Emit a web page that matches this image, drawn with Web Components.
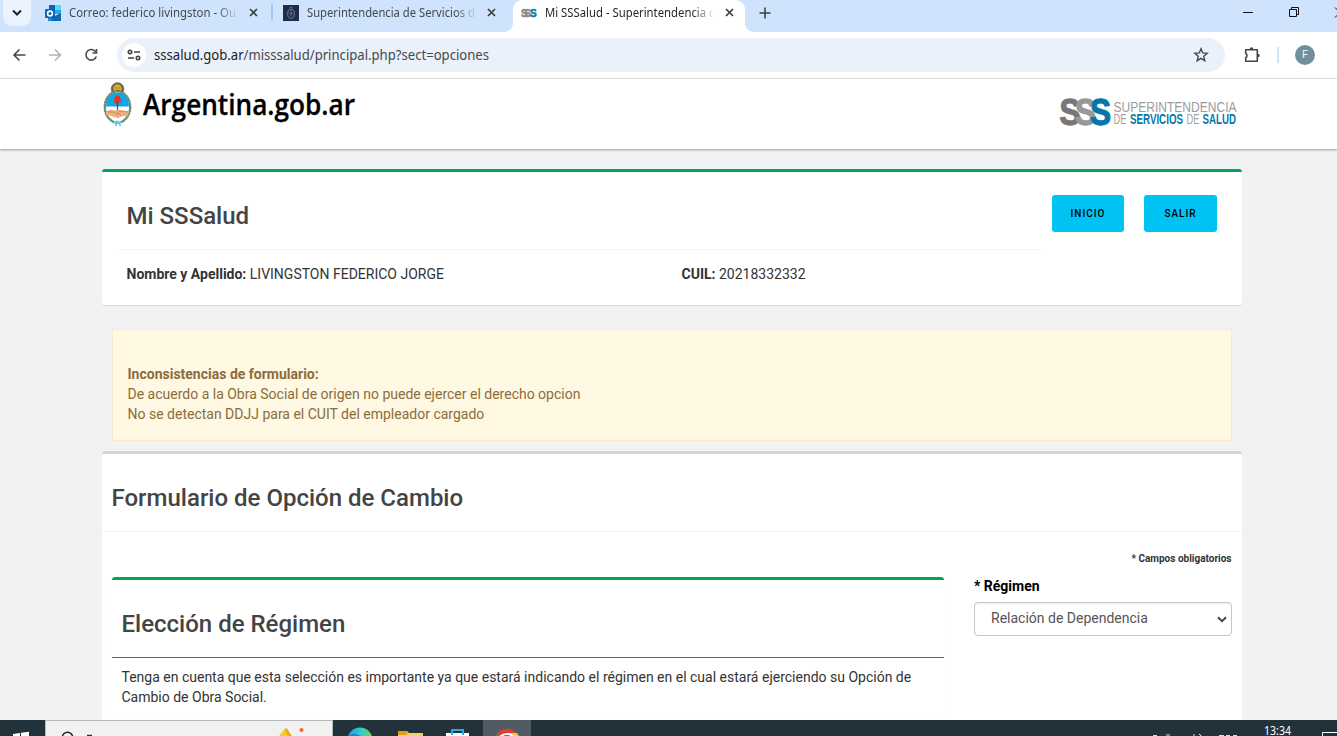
<!DOCTYPE html>
<html lang="es"><head><meta charset="utf-8"><title>Mi SSSalud</title>
<style>
html,body{margin:0;height:736px;overflow:hidden}
body{display:flex;flex-direction:column;background:#f1f2f4;font-family:Roboto,"Liberation Sans",sans-serif;font-size:14px;line-height:20px;color:#333}
</style></head><body>
<browser-tabs></browser-tabs>
<browser-toolbar></browser-toolbar>
<site-header></site-header>
<main-view></main-view>
<task-bar></task-bar>
<script>
const define=(name,html)=>customElements.define(name,class extends HTMLElement{
  constructor(){super();this.attachShadow({mode:'open'}).innerHTML=typeof html==='function'?html(this):html}
});

define('browser-tab',el=>`<style>
:host{display:flex;align-items:center;height:32px;width:238px;box-sizing:border-box;padding:0 12px 7px 11px;font:12px/18px "Noto Sans","Open Sans",sans-serif;color:#444a50;position:relative}
:host([active]){background:#fff;border-radius:9px 9px 0 0;width:232px;padding-left:8px;color:#25282b}
:host([active])::before,:host([active])::after{content:"";position:absolute;bottom:0;width:9px;height:9px}
:host([active])::before{left:-9px;background:radial-gradient(circle at 0 0,transparent 8.6px,#fff 9.2px)}
:host([active])::after{right:-9px;background:radial-gradient(circle at 100% 0,transparent 8.6px,#fff 9.2px)}
::slotted(svg){flex:none;width:16px;height:16px}
.t{width:168px;margin-left:8px;flex:none;height:18px;-webkit-mask:linear-gradient(90deg,#000 148px,transparent 170px)}
.t svg{display:block;overflow:visible}
.x{width:9px;height:9px;margin-left:11.5px;flex:none}
</style><slot></slot><div class="t"><svg width="168" height="18"><text x="0" y="13" fill="currentColor" textLength="${el.getAttribute('len')}" lengthAdjust="spacingAndGlyphs">${el.getAttribute('label')}</text></svg></div>
<svg class="x" viewBox="0 0 9 9"><path d="M1 1l7 7M8 1l-7 7" stroke="#3c4043" stroke-width="1.7"/></svg>`);

define('browser-tabs',`<style>
:host{display:flex;height:32px;flex:none;background:#cfe3fc;overflow:hidden}
.menu{width:28px;height:26px;margin-left:3px;background:#ecf3fe;border-radius:0 0 9px 9px;display:flex;align-items:center;justify-content:center}
.first{margin-left:3px}.sep{width:2px;height:16px;margin:4px 0 0 -1px;background:#a4c9fa}
.sep+browser-tab{margin-left:-1px;width:241px}
.plus{margin:7px 0 0 14px}.win{margin-left:auto}
</style><div class="menu"><svg width="10" height="8" viewBox="0 0 10 8"><path d="M1 1.5l4 4 4-4" fill="none" stroke="#202124" stroke-width="2"/></svg></div>
<browser-tab class="first" label="Correo: federico livingston - Ou" len="167"><svg viewBox="0 0 16 16"><path d="M4 0h12v9H4z" fill="#28a8ea"/><path d="M4 0h6v5H4z" fill="#0364b8"/><path d="M10 0h6v5h-6z" fill="#50d9ff"/><path d="M3 8l7 3 6-3v8H3z" fill="#1490df"/><path d="M8 12l8-4v8H6z" fill="#1066b5"/><rect y="4" width="10" height="9" rx="1" fill="#0a64b7"/><circle cx="5" cy="8.5" r="2.4" fill="none" stroke="#fff" stroke-width="1.6"/></svg></browser-tab>
<i class="sep"></i>
<browser-tab label="Superintendencia de Servicios d" len="168"><svg viewBox="0 0 16 16"><path fill="#202b50" d="M0 0h16v16H0z"/><ellipse cx="8" cy="8.8" rx="3.3" ry="4.6" fill="none" stroke="#77809e"/><path d="M6.5 3q1.5-2 3 0M8 5.5v6M6.5 8.5h3" fill="none" stroke="#68718f"/></svg></browser-tab>
<browser-tab active label="Mi SSSalud - Superintendencia d" len="171"><svg viewBox="0 0 16 16" font-family="Liberation Sans" font-weight="700" font-size="10"><text x="0" y="12" fill="#888" stroke="#888" stroke-width=".5" textLength="10">SS</text><text x="9" y="12" fill="#0677aa" stroke="#0677aa" stroke-width=".5">S</text></svg></browser-tab>
<svg class="plus" width="12" height="12"><path d="M6 .5v11M.5 6h11" stroke="#3c4043" stroke-width="1.6"/></svg>
<svg class="win" width="98" height="32" fill="none" stroke="#111"><path d="M4 12.5h10M50.500 9.500h7v7h-7zM52.500 9.500v-2h7v7h-2M96 7.500l10 10M96 17.500l10-10"/></svg>`);

define('browser-toolbar',`<style>
:host{display:flex;height:46px;flex:none;align-items:center;background:#fff;border-bottom:1px solid #dedfe1}
svg{flex:none;display:block}.nav{margin-left:12px}
.bar{display:flex;align-items:center;width:1108px;height:34px;box-sizing:border-box;border-radius:17px;background:#eaf1fa;margin-left:14px;padding:0 16px 0 5px}
.site{width:24px;height:24px;border-radius:50%;background:#fff;display:flex;align-items:center;justify-content:center}
.star{margin-left:auto}.ext{margin-left:18px}.sep{width:2px;height:16px;background:#d0e4fb;margin-left:16px}
.av{width:20px;height:20px;border-radius:50%;background:#71909c;color:#f4f7f8;margin-left:16px;font:11px/20px Roboto;text-align:center}
.url{margin-left:8px;font:13.5px "Noto Sans",sans-serif}
</style><svg class="nav" width="91" height="16" fill="none" stroke="#46494c" stroke-width="1.6"><path d="M13.500 8H2M7.500 2.500L2 8l5.500 5.500"/><path d="M37 8h11.500M43 2.500L48.500 8 43 13.500" stroke="#b0b2b4"/><path d="M83.600 4.800A5.300 5.300 0 1 0 84.300 9.500M84.500 2v4h-4"/></svg>
<div class="bar"><div class="site"><svg width="14" height="12" fill="none" stroke="#3c4043" stroke-width="1.600"><circle cx="3" cy="3" r="1.700"/><path d="M7 3h6M1 9h6"/><circle cx="11" cy="9" r="1.700"/></svg></div>
<svg class="url" width="336" height="22"><text y="16" textLength="335" lengthAdjust="spacingAndGlyphs" fill="#45494d"><tspan fill="#202124">sssalud.gob.ar</tspan>/misssalud/principal.php?sect=opciones</text></svg>
<svg class="star" width="16" height="16" fill="none" stroke="#44474a" stroke-width="1.400"><path d="M8 1.800l1.700 4.100 4.500.4-3.400 3 1 4.400L8 11.400l-3.800 2.300 1-4.400-3.400-3 4.500-.4z"/></svg></div>
<svg class="ext" width="18" height="18"><path d="M2.700 3.700h11.600v11.600H2.700v-3.500a2.700 2.700 0 0 0 0-4.600z" fill="none" stroke="#44474a" stroke-width="1.600" stroke-linejoin="round"/><path d="M6.700 3a1.800 1.800 0 0 1 3.600 0M15 7.700a1.800 1.800 0 0 1 0 3.600" fill="#44474a"/></svg><i class="sep"></i><div class="av">F</div>`);

define('site-header',`<style>
:host{display:flex;justify-content:space-between;height:70px;flex:none;background:#fff;box-shadow:0 1px 2px #999;padding:0 100px 0 102px;position:relative}
.l{display:flex;align-items:flex-start}.r{margin-top:17px}svg{display:block;overflow:visible}
</style><div class="l"><svg width="32" height="48" viewBox="0 0 32 48">
<circle cx="15.500" cy="10" r="6.300" fill="#68654d" stroke="#777" stroke-width="1"/><circle cx="15.500" cy="9.800" r="4.200" fill="#e5ad24"/><path d="M13.500 9h1M16.500 9h1M14 11.500h3" stroke="#553d16"/>
<ellipse cx="15.500" cy="28" rx="12.500" ry="15.500" fill="#fff" stroke="#649877" stroke-width="2"/><path d="M4 27.500C4 18 9 13.500 15.500 13.500S27 18 27 27.500z" fill="#12a6e4"/><ellipse cx="15.500" cy="28" rx="13.500" ry="16.500" fill="none" stroke="#686853" stroke-width=".7" stroke-dasharray="2 1"/>
<path d="M15.500 20v19" stroke="#633c2c" stroke-width="1.200"/><path d="M12 23.500l.5-5L15 16l3 1.500 1 5.500-1.500 1-2-1-2 1.500z" fill="#e63323"/><path d="M4 32.500l5-2 4 1 3-1 5 1 6 1-1 4-6 1-4 1.500-4-1-4-1.500-4-1z" fill="#f2ad85"/><path d="M5 33h6l5 3M26 33l-8-1-3 2 4 2" fill="none" stroke="#ad7552" stroke-width=".6"/><path d="M12 43.500l3-1 4 1M13 46h2m2 0h2" fill="none" stroke="#6fd0f3" stroke-width="2"/></svg>
<svg width="214" height="50" style="margin-left:8.500px"><text x="0" y="36" font-family="Open Sans,Noto Sans,sans-serif" font-weight="600" font-size="28" fill="#000" stroke="#000" stroke-width=".3" textLength="212" lengthAdjust="spacingAndGlyphs">Argentina.gob.ar</text></svg></div>
<svg class="r" width="176" height="33" font-family="Liberation Sans,sans-serif"><g font-weight="700" font-size="37" stroke-width="1.300"><text x="-1.500" y="29.300" fill="#777" stroke="#777" textLength="21" lengthAdjust="spacingAndGlyphs">S</text><text x="14" y="29.300" fill="#999" stroke="#999" textLength="21" lengthAdjust="spacingAndGlyphs">S</text><text x="29" y="29.300" fill="#0677aa" stroke="#0677aa" textLength="21" lengthAdjust="spacingAndGlyphs">S</text></g>
<text x="52.500" y="15.500" font-size="15" fill="#9c9c9c" textLength="123" lengthAdjust="spacingAndGlyphs">SUPERINTENDENCIA</text><g font-size="14"><text x="52.500" y="28" fill="#a4a4a4" textLength="13" lengthAdjust="spacingAndGlyphs">DE</text><text x="69" y="28" font-weight="700" fill="#0677aa" textLength="53" lengthAdjust="spacingAndGlyphs">SERVICIOS</text><text x="125.500" y="28" fill="#a4a4a4" textLength="13" lengthAdjust="spacingAndGlyphs">DE</text><text x="141.500" y="28" font-weight="700" fill="#0677aa" textLength="33.500" lengthAdjust="spacingAndGlyphs">SALUD</text></g></svg>`);

define('page-button',`<style>:host{display:block;box-sizing:border-box;height:37px;background:#00c3f3;border-radius:3px;color:#000;font-size:10px;line-height:37px;font-weight:500;letter-spacing:1px;text-align:center}</style><slot></slot>`);

define('user-card',`<style>
:host{display:block;height:136px;box-sizing:border-box;border-top:3px solid #00a65a;border-radius:3px;background:#fff;box-shadow:0 1px 1px #0000001a;padding:0 15px}
.top{display:flex;height:77px;align-items:flex-start}
.h{width:925px;height:78px;box-sizing:border-box;border-bottom:1px solid #f4f4f4;padding:30px 0 0 9.500px}
h1{margin:0;font-size:24px;line-height:28px;font-weight:500;color:#444}
.a{margin:23px 0 0 10px;width:72px}.b{margin:23px 0 0 20px;width:73px}
.row{display:grid;grid-template-columns:555px 1fr;padding:15px 0 0 9.500px}
</style><div class="top"><div class="h"><h1>Mi SSSalud</h1></div><page-button class="a">INICIO</page-button><page-button class="b">SALIR</page-button></div>
<div class="row"><div><b>Nombre y Apellido:</b> LIVINGSTON FEDERICO JORGE</div><div><b>CUIL:</b> 20218332332</div></div>`);

define('form-alert',`<style>:host{display:block;margin:24px 10px 0;height:112px;box-sizing:border-box;border:1px solid #faebcc;background:#fff8e3;color:#8a6d3b;padding:34px 15px 0 14.500px}</style><slot></slot>`);

define('regimen-box',`<style>
:host{display:block;width:832px;border-top:3px solid #00a65a;border-radius:3px 3px 0 0;box-shadow:0 0 1px #0001}
h2{margin:0;height:78px;box-sizing:border-box;padding:30px 9.500px 0;border-bottom:1px solid #666;font-size:24px;line-height:28px;font-weight:500;color:#444}
p{margin:0;padding:9px 9.500px 10px}
</style><h2>Elección de Régimen</h2><p>Tenga en cuenta que esta selección es importante ya que estará indicando el régimen en el cual estará ejerciendo su Opción de Cambio de Obra Social.</p>`);

define('select-field',`<style>
:host{display:block;width:258px;margin-top:-1px}label{display:block;color:#000;font-weight:700;line-height:20px}
.s{display:flex;justify-content:space-between;align-items:center;margin-top:6px;height:34px;box-sizing:border-box;border:1px solid #c6c6c6;border-radius:4px;padding:0 4px 2px 16px;color:#555;box-shadow:inset 0 1px 1px #0001}
svg{margin-top:3px}
</style><label><slot name="label"></slot></label><div class="s"><slot></slot><svg width="10" height="7"><path d="M1 1.200l4 4 4-4" fill="none" stroke="#444" stroke-width="2"/></svg></div>`);

define('form-card',`<style>
:host{display:block;margin-top:10px;height:280px;box-sizing:border-box;border-top:3px solid #d2d6de;border-radius:3px 3px 0 0;background:#fff}
h2{margin:0;height:78px;box-sizing:border-box;padding:30px 9.500px 0;border-bottom:1px solid #f4f4f4;font-size:24px;line-height:28px;font-weight:500;color:#444}
.req{text-align:right;font-weight:700;font-size:10px;line-height:14px;padding:20px 10.500px 0}
.cols{display:flex;justify-content:space-between;margin:11px 10px 0}
</style><h2>Formulario de Opción de Cambio</h2><div class="req">* Campos obligatorios</div>
<div class="cols"><regimen-box></regimen-box><select-field><span slot="label">* Régimen</span>Relación de Dependencia</select-field></div>`);

define('main-view',`<style>:host{display:block;height:571px;flex:none;box-sizing:border-box;padding:20px 95px 0 102px;overflow:hidden}</style>
<user-card></user-card><form-alert><b>Inconsistencias de formulario:</b><br>De acuerdo a la Obra Social de origen no puede ejercer el derecho opcion<br>No se detectan DDJJ para el CUIT del empleador cargado</form-alert><form-card></form-card>`);

define('task-bar',`<style>
:host{display:flex;height:16px;flex:none;overflow:hidden;background:#22323a;position:relative}
svg{display:block;flex:none}.search{width:288px;height:16px;box-sizing:border-box;background:#f1f1f1;border:1px solid #b5bab9;border-bottom:0;border-left-width:1px}
.apps{display:flex}.chrome{background:#505c62}.tray{margin-left:auto}
</style><svg width="45" height="16"><path d="M13 14l7-1v3h-7zM21 12.800l8-1V16h-8z" fill="#fff"/></svg>
<div class="search"><svg width="286" height="16"><circle cx="21.500" cy="16.500" r="5.200" fill="none" stroke="#222" stroke-width="1.500"/><path d="M41 14.500h5" stroke="#333" stroke-width="1.500"/><path d="M233 15l5.500-7q1-1 2 0l5 7z" fill="#f9cc22"/><path d="M239 7.500l2 0 5 8h-4z" fill="#e4ad18"/><circle cx="255.500" cy="9" r="2" fill="#f26a25"/></svg></div>
<svg width="150" height="16"><defs><linearGradient id="e"><stop stop-color="#1ba2e2"/><stop offset=".55" stop-color="#35c9cf"/><stop offset="1" stop-color="#6bdc4d"/></linearGradient></defs><circle cx="27" cy="20" r="12.500" fill="url(#e)"/><path d="M15 16q5-4 13 0z" fill="#1684cb"/><path d="M65 11h9l2 2h14v3H65z" fill="#f7cf62"/><path d="M65 11h8l2 2-2 2h-8z" fill="#dda016"/><path d="M113 13h23v3h-23z" fill="#fff"/><path d="M119 15v-5h11v5" fill="none" stroke="#29a9e8" stroke-width="2"/></svg>
<svg class="chrome" width="48" height="16"><path d="M13 16a12 12 0 0 1 22 0z" fill="#e33b2e"/><path d="M24 13h10l2 3H24z" fill="#fbc72e"/><path d="M16 16q8-6 16 0z" fill="#fff"/><path d="M20 16q4-2.500 8 0z" fill="#3881e8"/><path d="M13 15l2-1 2 2h-4z" fill="#32964b"/></svg>
<svg class="tray" width="190" height="16" fill="#fff" stroke="none"><text x="117" y="14.500" font-family="Noto Sans,sans-serif" font-size="12" textLength="27" lengthAdjust="spacingAndGlyphs">13:34</text><path d="M6 15.500h4M20 14v2M22 14v2M47 14v2M72 15.500h5M79 15.500h4M86 15.500h4" stroke="#ddd" stroke-width="1"/><path d="M52 14q2 1 2 2M175.500 16v-3.500h17" fill="none" stroke="#fff"/></svg>`);
</script></body></html>
